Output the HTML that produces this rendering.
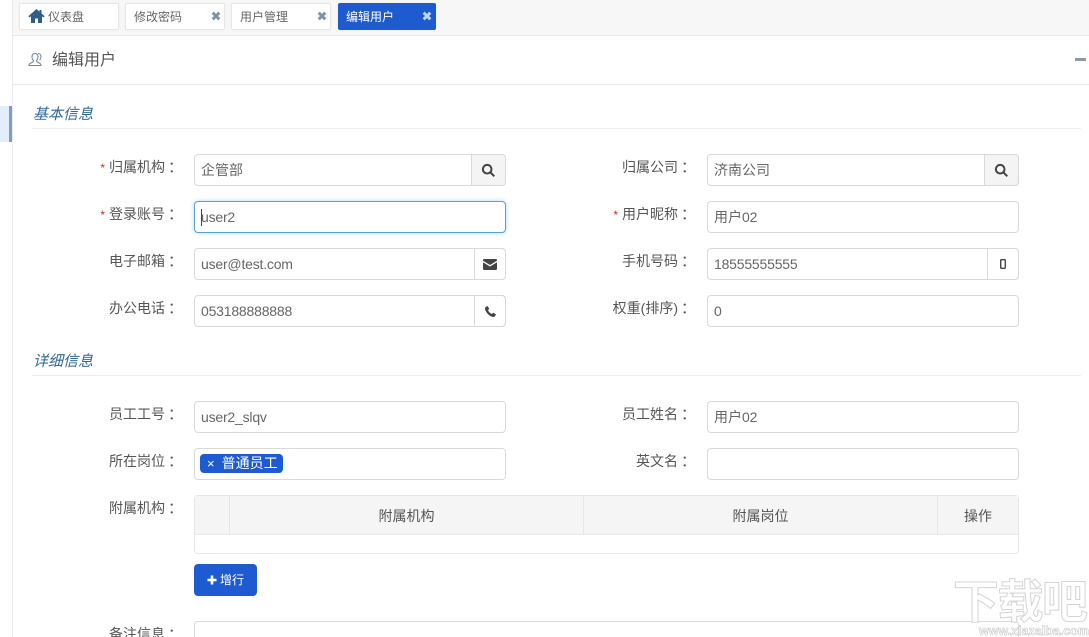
<!DOCTYPE html>
<html lang="zh"><head><meta charset="utf-8"><title>编辑用户</title>
<style>
html,body{margin:0;padding:0;background:#fff;width:1089px;height:637px;overflow:hidden}
#p{width:1089px;height:637px;position:relative;overflow:hidden;font-family:"Liberation Sans","Noto Sans CJK SC",sans-serif;color:#555}
.a{position:absolute;box-sizing:border-box}
.tab{position:absolute;top:3px;height:27px;width:100px;box-sizing:border-box;background:#fff;border:1px solid #e6e6e6;border-radius:2px;box-shadow:0 0 2px #eee;font-size:12px;line-height:26px;color:#666;padding-left:8px}
.tab .x{position:absolute;right:3px;top:7px;width:10px;height:10px}
.lbl{position:absolute;font-size:14px;line-height:18px;color:#555;text-align:right;white-space:nowrap;margin-right:-1px}
.lbl b{font-weight:400;display:inline-block;width:12px;text-align:left;padding-left:3px;box-sizing:border-box;font-family:"Liberation Sans",sans-serif;font-size:15px;white-space:nowrap}
.lbl i{color:#b33;font-style:normal;font-size:12px;margin-right:4px}
.inp{position:absolute;height:32px;box-sizing:border-box;border:1px solid #d9d9d9;border-radius:4px;background:#fff;font-size:14px;line-height:31px;color:#666;padding-left:6px;white-space:nowrap}
.l{letter-spacing:-.2px}
.add{position:absolute;top:-1px;right:-1px;height:32px;box-sizing:border-box;border:1px solid #d9d9d9;border-radius:0 4px 4px 0;display:flex;align-items:center;justify-content:center}
.sec{position:absolute;left:33px;font-size:15px;line-height:20px;font-style:italic;color:#31699c}
.rule{position:absolute;left:32px;right:8px;height:1px;background:#eee}
.th{position:absolute;top:496px;height:38px;box-sizing:border-box;border-right:1px solid #e8e8e8;background:#f5f5f5;font-size:14px;line-height:41px;text-align:center;color:#555}
</style></head><body><div id="p">
<div class="a" style="left:12px;top:0;width:1px;height:637px;background:#eaeaea"></div>
<div class="a" style="left:0;top:106px;width:9px;height:36px;background:#e3eefb"></div>
<div class="a" style="left:9px;top:106px;width:3px;height:36px;background:#8499c4"></div>
<div class="a" style="left:13px;top:0;width:1076px;height:36px;background:#f7f7f7;border-bottom:1px solid #eaeaea"></div>

<div class="tab" style="left:19px;padding-left:28px">
<svg class="a" style="left:8px;top:4px" width="17" height="16" viewBox="0 0 17 15"><path d="M8.500 .5 L0.300 7.800 L1.500 9 L3 7.800 V14.500 H7 V10 H10 V14.500 H14 V7.800 L15.500 9 L16.700 7.800 L13.500 5 V1.500 H11.500 V3.300 Z" fill="#2f5d85"/></svg>仪表盘</div>
<div class="tab" style="left:125px">修改密码<svg class="x" viewBox="0 0 9 9"><path d="M1.500 1.500L7.500 7.500M7.500 1.500L1.500 7.500" stroke="#7d93ad" stroke-width="2.600"/></svg></div>
<div class="tab" style="left:231px">用户管理<svg class="x" viewBox="0 0 9 9"><path d="M1.500 1.500L7.500 7.500M7.500 1.500L1.500 7.500" stroke="#7d93ad" stroke-width="2.600"/></svg></div>
<div class="tab" style="left:338px;width:98px;background:#1f5bd0;border-color:#1f5bd0;color:#fff;padding-left:7px">编辑用户<svg class="x" viewBox="0 0 9 9"><path d="M1.500 1.500L7.500 7.500M7.500 1.500L1.500 7.500" stroke="#c4d5f2" stroke-width="2.600"/></svg></div>

<svg class="a" style="left:28px;top:52px" width="15" height="15" viewBox="0 0 15 15" fill="none" stroke="#6f84a8" stroke-width="1"><path d="M7 1.500C5 1.500 4 3 4 5c0 1.500 .6 2.700 1.500 3.500 0 1-.5 1.500-1.500 2-1.500 .6-3 1-3 3h12c0-2-1.500-2.400-3-3-1-.5-1.500-1-1.500-2C9.400 7.700 10 6.500 10 5c0-2-1-3.500-3-3.500z"/><path d="M10 1.500c2 0 3 1.500 3 3.300 0 1.500-.6 2.600-1.300 3.400"/></svg>
<div class="a" style="left:52px;top:50px;font-size:16px;line-height:22px;color:#555;white-space:nowrap">编辑用户</div>
<div class="a" style="left:13px;top:84px;width:1076px;height:1px;background:#eaeaea"></div>
<div class="a" style="left:1075px;top:58px;width:11px;height:3px;background:#8c97a8"></div>

<div class="sec" style="top:105px">基本信息</div><div class="rule" style="top:128px"></div>

<div class="lbl" style="right:913px;top:158px"><i>*</i>归属机构<b>：</b></div>
<div class="inp" style="left:194px;top:154px;width:312px">企管部<div class="add" style="width:35px;background:#f4f4f4"><svg width="15" height="15" viewBox="0 0 15 15" fill="none" stroke="#444" stroke-width="2"><circle cx="6.200" cy="6.200" r="4.300"/><path d="M9.500 9.500L13.300 13.300"/></svg></div></div>
<div class="lbl" style="right:400px;top:158px">归属公司<b>：</b></div>
<div class="inp" style="left:707px;top:154px;width:312px">济南公司<div class="add" style="width:35px;background:#f4f4f4"><svg width="15" height="15" viewBox="0 0 15 15" fill="none" stroke="#444" stroke-width="2"><circle cx="6.200" cy="6.200" r="4.300"/><path d="M9.500 9.500L13.300 13.300"/></svg></div></div>

<div class="lbl" style="right:913px;top:205px"><i>*</i>登录账号<b>：</b></div>
<div class="inp" style="left:194px;top:201px;width:312px;border-color:#5d9fc8;box-shadow:0 0 5px #a8dcf8"><span class="l">user2</span><div class="a" style="left:6px;top:7px;width:1px;height:17px;background:#444"></div></div>
<div class="lbl" style="right:400px;top:205px"><i>*</i>用户昵称<b>：</b></div>
<div class="inp" style="left:707px;top:201px;width:312px">用户<span class="l">02</span></div>

<div class="lbl" style="right:913px;top:252px">电子邮箱<b>：</b></div>
<div class="inp" style="left:194px;top:248px;width:312px"><span class="l">user@test.com</span><div class="add" style="width:32px"><svg width="14" height="11" viewBox="0 0 14 11"><path d="M0 1.200C0 .5 .5 0 1.200 0h11.600c.7 0 1.200 .5 1.200 1.200v.6L7 6 0 1.800zM0 3.300L7 7.500l7-4.200v6.500c0 .7-.5 1.200-1.200 1.200H1.200C.5 11 0 10.500 0 9.800z" fill="#444"/></svg></div></div>
<div class="lbl" style="right:400px;top:252px">手机号码<b>：</b></div>
<div class="inp" style="left:707px;top:248px;width:312px"><span class="l">18555555555</span><div class="add" style="width:32px"><svg width="6" height="10" viewBox="0 0 6 10"><rect x=".7" y=".7" width="4.600" height="8.600" rx=".8" fill="none" stroke="#444" stroke-width="1.400"/></svg></div></div>

<div class="lbl" style="right:913px;top:299px">办公电话<b>：</b></div>
<div class="inp" style="left:194px;top:295px;width:312px"><span class="l">053188888888</span><div class="add" style="width:32px"><svg width="11" height="11" viewBox="0 0 11 11"><path d="M2.600 0L4.200 2.800 3 4.200C3.700 5.700 5.300 7.300 6.800 8L8.200 6.800 11 8.400 10 10.300C9.500 11 8.300 11.200 7 10.700 3.900 9.500 1.500 7.100 .3 4 -.2 2.700 0 1.500 .7 1z" fill="#444"/></svg></div></div>
<div class="lbl" style="right:400px;top:299px">权重(排序)<b>：</b></div>
<div class="inp" style="left:707px;top:295px;width:312px">0</div>

<div class="sec" style="top:352px">详细信息</div><div class="rule" style="top:375px"></div>

<div class="lbl" style="right:913px;top:405px">员工工号<b>：</b></div>
<div class="inp" style="left:194px;top:401px;width:312px"><span class="l">user2_slqv</span></div>
<div class="lbl" style="right:400px;top:405px">员工姓名<b>：</b></div>
<div class="inp" style="left:707px;top:401px;width:312px">用户<span class="l">02</span></div>

<div class="lbl" style="right:913px;top:452px">所在岗位<b>：</b></div>
<div class="inp" style="left:194px;top:448px;width:312px"></div>
<div class="a" style="left:200px;top:454px;width:83px;height:19px;background:#1f5bd0;border-radius:4px;color:#fff;font-size:14px;line-height:18px;padding-left:7px;white-space:nowrap"><span style="font-size:13px;margin-right:7px">×</span>普通员工</div>
<div class="lbl" style="right:400px;top:452px">英文名<b>：</b></div>
<div class="inp" style="left:707px;top:448px;width:312px"></div>

<div class="lbl" style="right:913px;top:499px">附属机构<b>：</b></div>
<div class="a" style="left:194px;top:495px;width:825px;height:59px;border:1px solid #e6e6e6;border-radius:4px"></div>
<div class="th" style="left:195px;width:35px"></div>
<div class="th" style="left:230px;width:354px">附属机构</div>
<div class="th" style="left:584px;width:354px">附属岗位</div>
<div class="th" style="left:938px;width:80px;border-right:0">操作</div>
<div class="a" style="left:195px;top:534px;width:823px;height:1px;background:#e8e8e8"></div>

<div class="a" style="left:194px;top:564px;width:63px;height:32px;background:#1f5bd0;border-radius:4px;color:#fff;font-size:12px;line-height:32px;padding-left:26px;white-space:nowrap">增行<svg class="a" style="left:13px;top:11px" width="10" height="10" viewBox="0 0 10 10"><path d="M5 .5V9.500M.5 5H9.500" stroke="#fff" stroke-width="2.600"/></svg></div>

<div class="lbl" style="right:913px;top:625px">备注信息<b>：</b></div>
<div class="a" style="left:194px;top:621px;width:825px;height:40px;border:1px solid #d9d9d9;border-radius:4px"></div>

<div class="a" style="left:953px;top:572px;font-size:46px;line-height:54px;letter-spacing:-1.500px;color:#fff;-webkit-text-stroke:1px #d4d4d4;white-space:nowrap;font-family:'Noto Sans CJK SC',sans-serif;font-weight:700">下载吧</div>
<div class="a" style="left:979px;top:625px;font-size:12.500px;line-height:13px;font-weight:700;color:#fff;-webkit-text-stroke:.6px #c8c8c8;white-space:nowrap">www.xiazaiba.com</div>
</div></body></html>
